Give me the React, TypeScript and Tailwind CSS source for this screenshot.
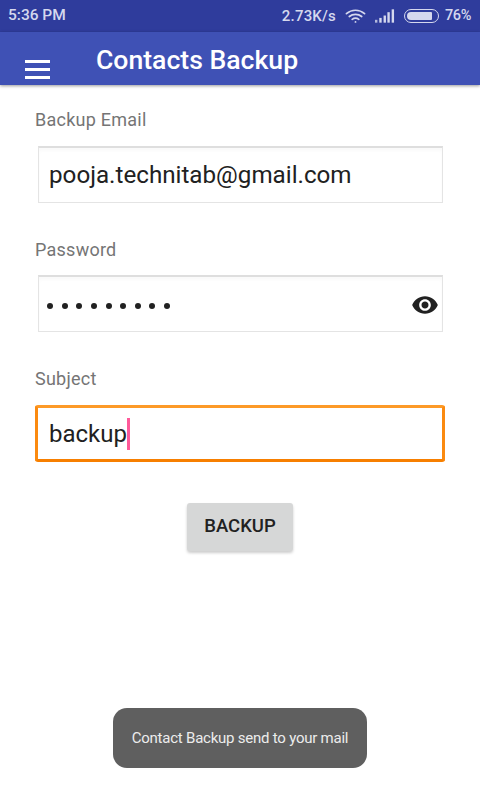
import React from 'react';

const font = { fontFamily: 'Roboto, sans-serif' };

const Field: React.FC<{ label: string; children: React.ReactNode }> = ({ label, children }) => (
  <div>
    <div className="h-[26px] text-[18px] leading-[26px] text-[#757575] pl-[35px] tracking-[0.25px]">{label}</div>
    {children}
  </div>
);

const inputBox =
  'ml-[38px] w-[405px] h-[57px] bg-white border border-[#e4e4e4] border-t-2 border-t-[#dedede] shadow-[inset_0_3px_3px_rgba(0,0,0,0.025)] flex items-center pl-[10px] text-[#212121] relative';

export default function App() {
  return (
    <div className="relative w-[480px] h-[800px] bg-white overflow-hidden" style={font}>
      {/* Status bar */}
      <div className="h-[32px] bg-[#2f3c9c] flex items-center justify-between pl-[8px] pr-[9px] text-[#d5d8ee] font-medium">
        <span className="text-[15.5px]">5:36 PM</span>
        <div className="flex items-center">
          <span className="text-[15px] tracking-[0.2px]">2.73K/s</span>
          <svg className="ml-[9px]" width="21" height="16" viewBox="0 0 22 16" fill="none" stroke="#d5d8ee" strokeWidth="1.8" strokeLinecap="round">
            <path d="M1.5 5.5C7 0.8 15 0.8 20.5 5.5" />
            <path d="M4.5 8.5C8.3 5.5 13.7 5.5 17.5 8.5" />
            <path d="M7.5 11.5C9.6 10 12.4 10 14.5 11.5" />
            <circle cx="11" cy="14.2" r="1" fill="#d5d8ee" stroke="none" />
          </svg>
          <svg className="ml-[9px]" width="20" height="16" viewBox="0 0 21 16" fill="#d5d8ee">
            <rect x="0" y="12" width="2.5" height="3" opacity="0.8" />
            <rect x="4.5" y="10" width="2.5" height="5" />
            <rect x="9" y="7.5" width="2.5" height="7.5" />
            <rect x="13" y="4" width="2.5" height="11" />
            <rect x="17.5" y="1" width="2.5" height="14" />
          </svg>
          <div className="ml-[9px] w-[35px] h-[14px] rounded-full border border-[#d5d8ee] p-[2px] flex">
            <div className="w-[25px] h-full bg-[#d5d8ee] rounded-l-[4px] rounded-r-[1px]" />
          </div>
          <span className="ml-[6px] text-[14.5px] tracking-[-0.4px]">76%</span>
        </div>
      </div>

      {/* App bar */}
      <div className="relative h-[53px] bg-[#3f51b5] shadow-[0_1px_3px_rgba(0,0,0,0.4)] flex">
        <div className="ml-[25px] mt-[28px] w-[25px] flex flex-col gap-[5px]">
          <div className="h-[3px] bg-white" />
          <div className="h-[3px] bg-white" />
          <div className="h-[3px] bg-white" />
        </div>
        <div className="ml-[46px] mt-[10px] text-[26.6px] leading-[36px] font-medium text-white">Contacts Backup</div>
      </div>

      {/* Form */}
      <div className="pt-[22px] flex flex-col">
        <Field label="Backup Email">
          <div className={`mt-[13px] text-[24.2px] ${inputBox}`}>pooja.technitab@gmail.com</div>
        </Field>

        <div className="mt-[34px]">
          <Field label="Password">
            <div className={`mt-[12px] ${inputBox}`}>
              <div className="flex gap-[8.65px] mt-[4px] -ml-[2px]">
                {Array.from({ length: 9 }, (_, i) => (
                  <span key={i} className="w-[6px] h-[6px] rounded-full bg-[#212121]" />
                ))}
              </div>
              <svg className="absolute right-[3px] top-[14px]" width="28" height="28" viewBox="0 0 24 24" fill="#212121">
                <path d="M12 4.5C7 4.5 2.7 7.6 1 12c1.7 4.4 6 7.5 11 7.5s9.3-3.1 11-7.5c-1.7-4.4-6-7.5-11-7.5zM12 17c-2.8 0-5-2.2-5-5s2.2-5 5-5 5 2.2 5 5-2.2 5-5 5zm0-8c-1.7 0-3 1.3-3 3s1.3 3 3 3 3-1.3 3-3-1.3-3-3-3z" />
              </svg>
            </div>
          </Field>
        </div>

        <div className="mt-[34px]">
          <Field label="Subject">
            <div className="mt-[13px] ml-[35px] w-[410px] h-[57px] rounded-[3px] border-[3px] border-[#fb8a10] border-t-[#fd9a27] border-b-[#f77f00] bg-white flex items-center pl-[11px] text-[24px] text-[#212121]">
              <span>backup</span>
              <span className="w-[3px] h-[32px] bg-[#ff5a9a]" />
            </div>
          </Field>
        </div>

        <button className="self-center mt-[41px] w-[106px] h-[48px] bg-[#d6d7d7] rounded-[3px] text-[18.5px] font-medium text-[#212121] shadow-[0_2px_3px_rgba(0,0,0,0.2)]">
          BACKUP
        </button>
      </div>

      {/* Toast */}
      <div className="absolute left-[113px] top-[708px] w-[254px] h-[60px] rounded-[14px] bg-[#5f5f5f] flex items-center justify-center text-[15px] tracking-[-0.23px] text-[#ececec]">
        Contact Backup send to your mail
      </div>
    </div>
  );
}
